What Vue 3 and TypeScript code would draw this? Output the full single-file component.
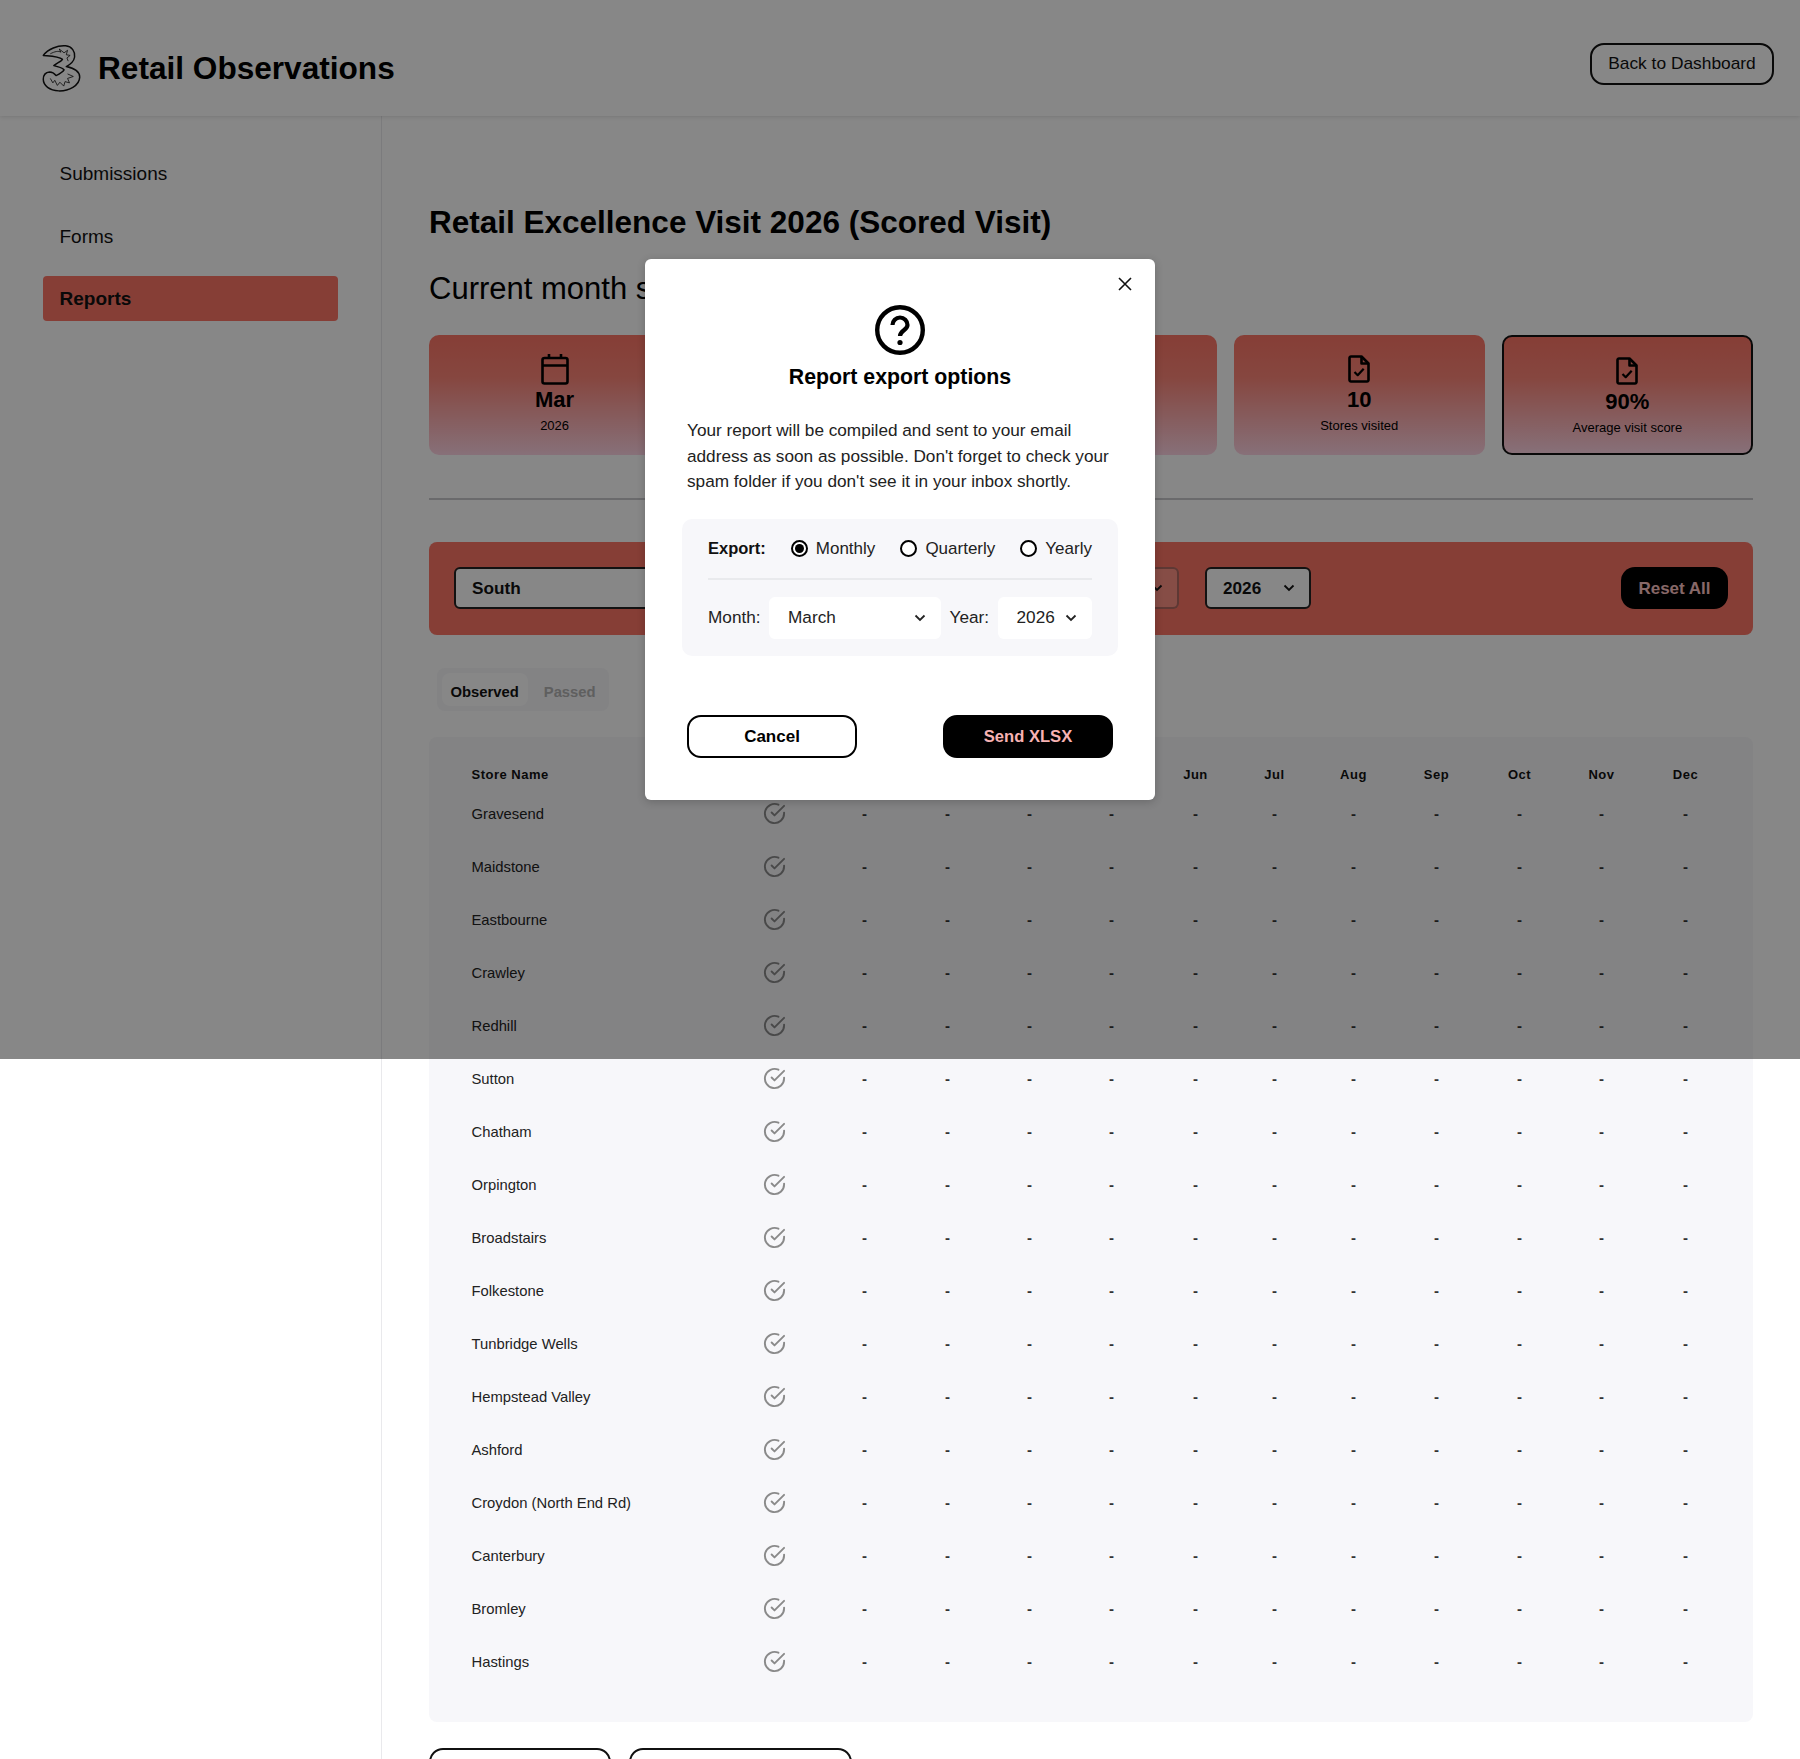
<script setup lang="ts">
  interface StatCard {
    value?: string
    label?: string
    icon?: 'calendar' | 'file'
    selected?: boolean
  }

  const navItems = ['Submissions', 'Forms', 'Reports']

  // the middle two cards sit fully behind the dialog
  const cards: StatCard[] = [
    { value: 'Mar', label: '2026', icon: 'calendar' },
    {},
    {},
    { value: '10', label: 'Stores visited', icon: 'file' },
    { value: '90%', label: 'Average visit score', icon: 'file', selected: true },
  ]

  const months = ['Jan', 'Feb', 'Mar', 'Apr', 'May', 'Jun', 'Jul', 'Aug', 'Sep', 'Oct', 'Nov', 'Dec']

  const stores = [
    'Gravesend',
    'Maidstone',
    'Eastbourne',
    'Crawley',
    'Redhill',
    'Sutton',
    'Chatham',
    'Orpington',
    'Broadstairs',
    'Folkestone',
    'Tunbridge Wells',
    'Hempstead Valley',
    'Ashford',
    'Croydon (North End Rd)',
    'Canterbury',
    'Bromley',
    'Hastings',
  ]

  const exportOptions = [
    { label: 'Monthly', checked: true },
    { label: 'Quarterly', checked: false },
    { label: 'Yearly', checked: false },
  ]
</script>

<template>
  <div class="app">
    <header class="topbar">
      <div class="brand">
        <svg class="logo" viewBox="66 66 122 150" fill="none" stroke="currentColor" stroke-width="4.600" stroke-linejoin="round">
          <path d="M70 100C85 80 115 68 140 70C160 72 170 88 168 105C166 118 155 128 142 135C165 140 184 150 184 168C183 195 150 212 118 211C90 210 70 195 70 175C70 162 78 153 90 152C100 152 106 158 110 163C120 158 132 150 135 145C128 138 112 134 103 132C112 124 128 118 130 112C118 102 95 102 70 100Z" />
          <path stroke-width="2.500" d="M92 95C105 88 118 85 125 90L120 80L135 92L146 84L142 98L154 100L144 108L148 118" />
          <path stroke-width="2.500" d="M92 172L100 186L106 178L114 194L122 184L134 196L138 182L152 186L146 172L164 166L146 158" />
        </svg>
        <span class="brand-name">Retail Observations</span>
      </div>
      <button class="outline-btn back-btn">Back to Dashboard</button>
    </header>

    <div class="body">
      <aside class="sidebar">
        <a v-for="item in navItems" :key="item" class="nav-item" :class="{ active: item === 'Reports' }">{{ item }}</a>
      </aside>

      <main class="content">
        <h1>Retail Excellence Visit 2026 (Scored Visit)</h1>
        <h2>Current month summary</h2>

        <section class="cards">
          <div v-for="(card, i) in cards" :key="i" class="card" :class="{ selected: card.selected }">
            <svg v-if="card.icon === 'calendar'" class="card-icon calendar" viewBox="0 0 28 31" fill="none" stroke="currentColor" stroke-width="2.600">
              <rect x="1.500" y="4" width="25" height="25.500" rx="2" />
              <path d="M1.500 11.500h25M8 0v5M20 0v5" />
            </svg>
            <svg v-else-if="card.icon === 'file'" class="card-icon file" viewBox="0 0 22 28" fill="none" stroke="currentColor" stroke-width="2.600" stroke-linejoin="round">
              <path d="M13.500 1.500H3a1.500 1.500 0 0 0-1.500 1.500v22A1.500 1.500 0 0 0 3 26.500h16a1.500 1.500 0 0 0 1.500-1.500V8.500z" />
              <path d="M13.500 1.500V8.500h7" />
              <path stroke-width="2.200" d="M6.500 17l3.200 3.200 6-6.500" />
            </svg>
            <strong v-if="card.value" class="card-value">{{ card.value }}</strong>
            <span v-if="card.label" class="card-label">{{ card.label }}</span>
          </div>
        </section>

        <hr class="divider" />

        <section class="filters">
          <div class="filter-select region">South</div>
          <div class="filter-select muted">
            <svg class="chevron" viewBox="0 0 12 8" fill="none" stroke="currentColor" stroke-width="1.800"><path d="M1.500 1.500 6 6l4.500-4.500" /></svg>
          </div>
          <div class="filter-select year">
            2026
            <svg class="chevron" viewBox="0 0 12 8" fill="none" stroke="currentColor" stroke-width="1.800"><path d="M1.500 1.500 6 6l4.500-4.500" /></svg>
          </div>
          <button class="reset-btn">Reset All</button>
        </section>

        <div class="tabs">
          <span class="tab active">Observed</span>
          <span class="tab">Passed</span>
        </div>

        <section class="table">
          <div class="table-row table-head">
            <span class="store">Store Name</span>
            <span v-for="month in months" :key="month" class="cell">{{ month }}</span>
          </div>
          <div v-for="store in stores" :key="store" class="table-row">
            <span class="store store-name">{{ store }}</span>
            <span class="cell">
              <svg class="check" viewBox="0 0 24 24" fill="none" stroke="currentColor" stroke-width="2" stroke-linecap="round" stroke-linejoin="round">
                <path d="M22 11.080V12a10 10 0 1 1-5.930-9.140" />
                <path d="M22 4 12 14.010l-3-3" />
              </svg>
            </span>
            <span v-for="month in months.slice(1)" :key="month" class="cell dash">-</span>
          </div>
        </section>

        <div class="page-actions">
          <button class="outline-btn action-report"></button>
          <button class="outline-btn action-raw"></button>
        </div>
      </main>
    </div>

    <div class="overlay">
      <div class="modal">
        <button class="close" aria-label="Close">
          <svg viewBox="0 0 14 14" fill="none" stroke="currentColor" stroke-width="1.600"><path d="M1 1l12 12M13 1 1 13" /></svg>
        </button>
        <svg class="question" viewBox="0 0 50 50" fill="none" stroke="currentColor">
          <circle cx="25" cy="25" r="22.800" stroke-width="4.400" />
          <path stroke-width="4.200" d="M17.500 20a7.500 7.500 0 0 1 15 0c0 5-7.500 5.500-7.500 11" />
          <circle cx="25" cy="37.500" r="2.600" fill="currentColor" stroke="none" />
        </svg>
        <h3>Report export options</h3>
        <p>Your report will be compiled and sent to your email address as soon as possible. Don't forget to check your spam folder if you don't see it in your inbox shortly.</p>

        <div class="panel">
          <div class="export-row">
            <strong>Export:</strong>
            <label v-for="option in exportOptions" :key="option.label" class="radio">
              <span class="radio-mark" :class="{ checked: option.checked }"></span>
              {{ option.label }}
            </label>
          </div>
          <div class="date-row">
            <span>Month:</span>
            <div class="modal-select month">
              March
              <svg class="chevron" viewBox="0 0 12 8" fill="none" stroke="currentColor" stroke-width="1.800"><path d="M1.500 1.500 6 6l4.500-4.500" /></svg>
            </div>
            <span>Year:</span>
            <div class="modal-select year-select">
              2026
              <svg class="chevron" viewBox="0 0 12 8" fill="none" stroke="currentColor" stroke-width="1.800"><path d="M1.500 1.500 6 6l4.500-4.500" /></svg>
            </div>
          </div>
        </div>

        <div class="modal-actions">
          <button class="modal-btn cancel">Cancel</button>
          <button class="modal-btn send">Send XLSX</button>
        </div>
      </div>
    </div>
  </div>
</template>

<style>
  html,
  body {
    margin: 0;
    overflow: hidden;
    background: #fff;
  }
</style>

<style scoped>
  .app {
    position: relative;
    height: 1759px;
    overflow: hidden;
    font-family: 'Liberation Sans', Arial, sans-serif;
    color: #111;
    background: #fff;
  }

  .topbar {
    position: relative;
    z-index: 1;
    display: flex;
    align-items: center;
    justify-content: space-between;
    height: 116px;
    padding: 0 26px 0 42px;
    box-sizing: border-box;
    background: #fff;
    box-shadow: 0 1px 4px rgba(0, 0, 0, 0.12);
  }

  .brand {
    display: flex;
    align-items: center;
    gap: 17px;
    margin-top: 20px;
  }

  .logo {
    width: 39px;
    height: 49px;
    color: #111;
  }

  .brand-name {
    font-size: 31.600px;
    font-weight: 700;
    color: #000;
  }

  .outline-btn {
    height: 42px;
    box-sizing: border-box;
    border: 2px solid #111;
    border-radius: 14px;
    background: #fff;
    color: #111;
    font: 17.350px 'Liberation Sans', Arial, sans-serif;
  }

  .back-btn {
    width: 184px;
    margin-top: 12px;
    padding: 0 0 2px;
  }

  .body {
    display: flex;
  }

  .sidebar {
    display: flex;
    flex-direction: column;
    flex: 0 0 382px;
    box-sizing: border-box;
    height: 1643px;
    padding: 34px 43px 0;
    border-right: 1px solid #e9e9ec;
  }

  .nav-item {
    display: flex;
    align-items: center;
    box-sizing: border-box;
    height: 45px;
    padding: 2px 0 0 16.500px;
    margin-bottom: 18px;
    border-radius: 4px;
    font-size: 19px;
    color: #111;
  }

  .nav-item.active {
    padding-top: 0;
    background: #fd7667;
    font-weight: 700;
  }

  .content {
    flex: 1;
    min-width: 0;
    padding: 87px 47px 0 47px;
  }

  h1,
  h2 {
    margin: 0;
    font-size: 31.500px;
    line-height: 38px;
    color: #000;
  }

  h2 {
    margin-top: 29px;
    font-size: 31px;
    font-weight: 400;
  }

  .cards {
    display: grid;
    grid-template-columns: repeat(5, 1fr);
    gap: 17px;
    margin-top: 27px;
  }

  .card {
    display: flex;
    flex-direction: column;
    align-items: center;
    box-sizing: border-box;
    height: 120px;
    padding-top: 18px;
    border-radius: 10px;
    background: linear-gradient(180deg, #fd7667 0%, #fd8578 35%, #ffd4e4 100%);
    color: #000;
  }

  .card.selected {
    border: 2px solid #111;
  }

  .card-icon {
    display: block;
  }

  .card-icon.calendar {
    width: 28px;
    height: 31px;
    margin-top: 1px;
  }

  .card-icon.file {
    width: 22px;
    height: 28px;
    margin: 2px 0;
  }

  .card-value {
    margin-top: 2px;
    font-size: 22px;
    line-height: 26px;
  }

  .card-label {
    margin-top: 5px;
    font-size: 13px;
    line-height: 16px;
  }

  .divider {
    height: 2px;
    margin: 43px 0 0;
    border: 0;
    background: #c9c9cc;
  }

  .filters {
    display: flex;
    align-items: center;
    gap: 26px;
    height: 93px;
    box-sizing: border-box;
    margin-top: 41.500px;
    padding: 0 25px;
    border-radius: 8px;
    background: #fd7667;
  }

  .filter-select {
    display: flex;
    align-items: center;
    justify-content: space-between;
    box-sizing: border-box;
    height: 42px;
    padding: 0 14px 0 16px;
    border: 2px solid #222;
    border-radius: 6px;
    background: #fff;
    font-size: 17.200px;
    font-weight: 700;
  }

  .filter-select.region {
    width: 340px;
  }

  .filter-select.muted {
    justify-content: flex-end;
    width: 359px;
    border-color: rgba(34, 34, 34, 0.35);
    background: rgba(255, 255, 255, 0.2);
  }

  .filter-select.year {
    width: 106px;
  }

  .chevron {
    width: 12px;
    height: 8px;
  }

  .reset-btn {
    width: 107px;
    height: 42px;
    padding: 2px 0 0;
    margin-left: auto;
    border: 0;
    border-radius: 14px;
    background: #000;
    color: #ffc4c4;
    font: 700 17px 'Liberation Sans', Arial, sans-serif;
  }

  .tabs {
    display: inline-flex;
    align-items: center;
    gap: 7.500px;
    box-sizing: border-box;
    height: 43px;
    margin: 33.500px 0 0 8px;
    padding: 0 4px 0 5px;
    border-radius: 8px;
    background: #f7f7fa;
    vertical-align: top;
  }

  .tab {
    display: flex;
    align-items: center;
    box-sizing: border-box;
    height: 33px;
    padding: 5px 9px 0 8.500px;
    border-radius: 8px;
    font-size: 14.800px;
    font-weight: 700;
    color: #b3b3b3;
  }

  .tab.active {
    background: #fff;
    color: #111;
  }

  .table {
    box-sizing: border-box;
    height: 985px;
    margin-top: 25.500px;
    padding: 25px 0 0 42.500px;
    border-radius: 8px;
    background: #f7f7fa;
  }

  .table-row {
    display: grid;
    grid-template-columns: 255px 96px 84px 82px 82px 82px 86px 72px 86px 80px 86px 78px 90px;
    align-items: center;
    height: 53px;
    font-size: 14.800px;
    color: #222;
  }

  .store-name {
    padding-top: 2px;
  }

  .table-head {
    height: 25px;
    font-size: 13px;
    font-weight: 700;
    letter-spacing: 0.5px;
    color: #111;
  }

  .cell {
    display: flex;
    justify-content: center;
  }

  .dash {
    color: #333;
    font-size: 15px;
    font-weight: 700;
  }

  .check {
    width: 23px;
    height: 23px;
    color: #8a8a8a;
  }

  .page-actions {
    display: flex;
    gap: 18px;
    margin-top: 26px;
  }

  .action-report {
    width: 182px;
  }

  .action-raw {
    width: 223px;
  }

  .overlay {
    position: absolute;
    z-index: 5;
    top: 0;
    left: 0;
    right: 0;
    height: 1059px;
    display: flex;
    align-items: center;
    justify-content: center;
    background: rgba(0, 0, 0, 0.47);
  }

  .modal {
    position: relative;
    display: flex;
    flex-direction: column;
    align-items: center;
    box-sizing: border-box;
    width: 510px;
    height: 541px;
    padding: 46px 37px 0;
    border-radius: 6px;
    background: #fff;
    box-shadow: 0 2px 8px rgba(0, 0, 0, 0.2);
  }

  .close {
    position: absolute;
    top: 18px;
    right: 23px;
    width: 14px;
    height: 14px;
    padding: 0;
    border: 0;
    background: none;
    color: #111;
  }

  .close svg {
    display: block;
    width: 14px;
    height: 14px;
  }

  .question {
    width: 50px;
    height: 50px;
    color: #000;
  }

  h3 {
    margin: 9px 0 0;
    font-size: 21.300px;
    line-height: 26px;
    color: #000;
  }

  p {
    align-self: stretch;
    margin: 28px 0 0;
    padding: 0 0 0 5px;
    font-size: 17.200px;
    line-height: 25.500px;
    color: #222;
  }

  .panel {
    align-self: stretch;
    box-sizing: border-box;
    height: 137px;
    margin-top: 24px;
    padding: 17px 26px 0;
    border-radius: 10px;
    background: #f7f7fa;
    font-size: 17.200px;
    color: #222;
  }

  .export-row {
    display: flex;
    align-items: center;
    justify-content: space-between;
    height: 26px;
    padding-bottom: 16px;
    border-bottom: 2px solid #e9eaed;
    box-sizing: content-box;
  }

  .export-row strong {
    font-size: 16.500px;
    color: #111;
  }

  .radio {
    display: flex;
    align-items: center;
    gap: 8px;
    font-size: 17px;
  }

  .radio-mark {
    position: relative;
    width: 17px;
    height: 17px;
    box-sizing: border-box;
    border: 2px solid #000;
    border-radius: 50%;
    background: #fff;
  }

  .radio-mark.checked::after {
    content: '';
    position: absolute;
    inset: 2px;
    border-radius: 50%;
    background: #000;
  }

  .date-row {
    display: flex;
    align-items: center;
    gap: 8.500px;
    margin-top: 17px;
  }

  .modal-select {
    display: flex;
    align-items: center;
    justify-content: space-between;
    box-sizing: border-box;
    height: 42px;
    padding: 0 15px 0 19px;
    border-radius: 6px;
    background: #fff;
  }

  .modal-select.month {
    flex: 0 0 172px;
  }

  .modal-select.year-select {
    flex: 1;
  }

  .modal-actions {
    display: flex;
    justify-content: space-between;
    align-self: stretch;
    margin-top: 59px;
    padding: 0 5px;
  }

  .modal-btn {
    width: 170px;
    height: 43px;
    box-sizing: border-box;
    padding: 2px 0 0;
    border: 2px solid #000;
    border-radius: 14px;
    font: 700 17px 'Liberation Sans', Arial, sans-serif;
  }

  .modal-btn.cancel {
    background: #fff;
    color: #000;
  }

  .modal-btn.send {
    background: #000;
    color: #f7b2b2;
    font-size: 16.600px;
  }
</style>
